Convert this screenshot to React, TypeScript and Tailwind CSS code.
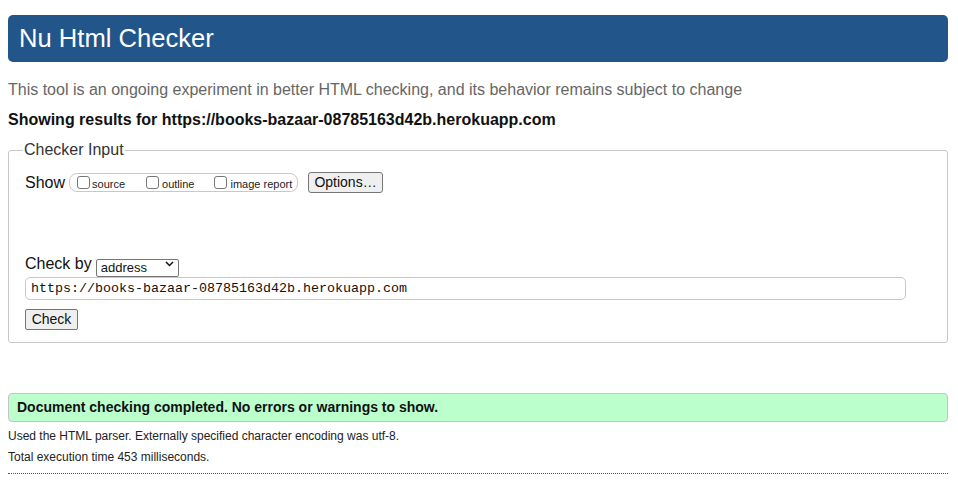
export default function App() {
  return (
    <div className="min-h-screen bg-white pl-2 pr-[10px] pt-[15px] font-['Liberation_Sans',Arial,sans-serif] text-[#222]">
      {/* header */}
      <div className="flex h-[47px] items-center rounded-[5px] bg-[#22558a] px-[11px]">
        <h1 className="text-[25.6px] leading-none text-white">Nu Html Checker</h1>
      </div>

      <p className="mt-[18px] text-[16px] leading-[20px] text-[#666]">
        This tool is an ongoing experiment in better HTML checking, and its behavior remains subject to change
      </p>
      <p className="mt-[10px] text-[16px] font-bold leading-[20px] text-[#111]">
        Showing results for https://books-bazaar-08785163d42b.herokuapp.com
      </p>

      {/* checker input */}
      <fieldset className="mt-[10px] h-[203px] rounded-[3px] border border-[#c8c8c8] px-4 pt-[12px]">
        <legend className="-ml-[2px] px-[1px] text-[16px] leading-[20px] text-[#333]">Checker Input</legend>

        <div className="flex items-center">
          <span className="text-[16px] leading-[20px] text-[#111]">Show</span>
          <div className="ml-[4px] flex h-[19px] w-[229px] items-center rounded-[8px] border border-[#c8c8c8] pl-[7px] text-[11px] text-[#222]">
            <label className="flex items-center">
              <input type="checkbox" className="h-[13px] w-[13px] appearance-none rounded-[3px] border border-[#777] bg-white" />
              <span className="ml-[2px] mt-[3px]">source</span>
            </label>
            <label className="ml-[21px] flex items-center">
              <input type="checkbox" className="h-[13px] w-[13px] appearance-none rounded-[3px] border border-[#777] bg-white" />
              <span className="ml-[3px] mt-[3px]">outline</span>
            </label>
            <label className="ml-[20px] flex items-center">
              <input type="checkbox" className="h-[13px] w-[13px] appearance-none rounded-[3px] border border-[#777] bg-white" />
              <span className="ml-[3px] mt-[3px]">image report</span>
            </label>
          </div>
          <button className="ml-[10px] flex h-[21px] w-[75px] items-center justify-center rounded-[3px] border border-[#767676] bg-[#efefef] text-[14px] text-[#111]">
            Options…
          </button>
        </div>

        <div className="mt-[61px] flex items-center">
          <span className="text-[16px] leading-[20px] text-[#111]">Check by</span>
          <div className="relative ml-[4px] h-[18px] w-[83px]">
            <select className="h-full w-full appearance-none rounded-[2px] border border-[#767676] bg-white py-0 pl-[4px] text-[13px] leading-none text-[#111]">
              <option>address</option>
            </select>
            <svg className="pointer-events-none absolute right-[5px] top-[6px]" width="9" height="6" viewBox="0 0 9 6">
              <path d="M1 1 L4.5 4.5 L8 1" fill="none" stroke="#111" strokeWidth="1.5" />
            </svg>
          </div>
        </div>

        <input
          readOnly
          value="https://books-bazaar-08785163d42b.herokuapp.com"
          className="mt-[3px] h-[23px] w-[881px] rounded-[5px] border border-[#c8c8c8] px-[5px] font-['Liberation_Mono',monospace] text-[13.33px] text-[#111] outline-none"
        />

        <button className="mt-[9px] flex h-[21px] w-[53px] items-center justify-center rounded-[2px] border border-[#767676] bg-[#efefef] text-[14px] text-[#111]">
          Check
        </button>
      </fieldset>

      {/* result */}
      <div className="mt-[50px] flex h-[29px] items-center rounded-[4px] border border-[#c4c4c4] bg-[#bfc] px-[8px]">
        <span className="text-[14px] font-bold text-[#111]">Document checking completed. No errors or warnings to show.</span>
      </div>
      <p className="mt-[7px] text-[12px] leading-[14px] text-[#222]">
        Used the HTML parser. Externally specified character encoding was utf-8.
      </p>
      <p className="mt-[7px] text-[12px] leading-[14px] text-[#222]">Total execution time 453 milliseconds.</p>
      <div className="mt-[9px] border-t border-dotted border-[#555]" />
    </div>
  );
}
